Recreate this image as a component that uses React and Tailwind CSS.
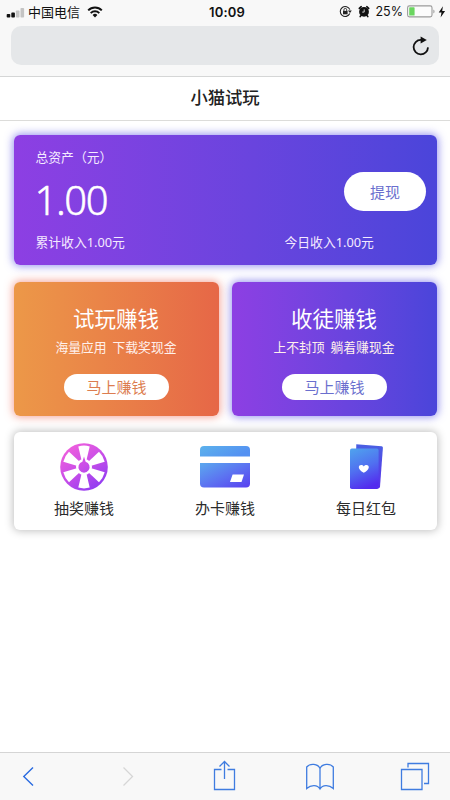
const CJK = "font-['Noto_Sans_CJK_SC',sans-serif]"

function SignalIcon() {
  return (
    <svg width="19" height="14" viewBox="0 0 19 14" className="ml-[6px]">
      <rect x="0.7" y="9" width="3.6" height="3.6" rx="0.8" fill="#111" />
      <rect x="5.3" y="7.6" width="3.6" height="5" rx="0.8" fill="#111" />
      <rect x="9.9" y="5.4" width="3.6" height="7.2" rx="0.8" fill="#c4c4c4" />
      <rect x="14.5" y="3" width="3.6" height="9.6" rx="0.8" fill="#c4c4c4" />
    </svg>
  )
}

function WifiIcon() {
  return (
    <svg width="16" height="12" viewBox="0 0 16 12" fill="none" stroke="#111" strokeWidth="2">
      <path d="M1.2 4.4A9.6 9.6 0 0 1 14.8 4.4" />
      <path d="M3.7 7.1A6.2 6.2 0 0 1 12.3 7.1" />
      <path d="M5.6 9A3.4 3.4 0 0 1 10.4 9L8 11.6Z" fill="#111" stroke="none" />
    </svg>
  )
}

function RotationLockIcon() {
  return (
    <svg width="13" height="13" viewBox="0 0 13 13" fill="none" stroke="#222">
      <path d="M10.8 8.6A5 5 0 1 1 10.9 4.6" strokeWidth="1.1" />
      <path d="M8.9 5.6L12.8 5.6L11 8.1Z" fill="#222" stroke="none" />
      <rect x="4" y="5.9" width="4.6" height="3.4" fill="#222" stroke="none" />
      <path d="M4.9 6V4.8a1.4 1.4 0 0 1 2.8 0V6" strokeWidth="0.9" />
    </svg>
  )
}

function AlarmIcon() {
  return (
    <svg width="12" height="13" viewBox="0 0 12 13">
      <circle cx="6" cy="6.8" r="4.9" fill="#111" />
      <path d="M1.3 3.4L3.2 1.7M10.7 3.4L8.8 1.7M2.8 10.8L2.2 11.6M9.2 10.8L9.8 11.6" stroke="#111" strokeWidth="1.6" strokeLinecap="round" />
      <path d="M6.2 4.4V7.1H4.2" stroke="#f8f8f8" strokeWidth="0.8" fill="none" />
    </svg>
  )
}

function BatteryIcon() {
  return (
    <svg width="29" height="13" viewBox="0 0 29 13">
      <rect x="0.6" y="0.9" width="24.4" height="11" rx="1.8" fill="#fcfcfc" stroke="#9b9b9b" strokeWidth="1.1" />
      <rect x="2.2" y="2.3" width="5.4" height="8.2" rx="0.6" fill="#6bd660" />
      <path d="M26.4 4.4c1.5.6 1.5 3.4 0 4z" fill="#9b9b9b" />
    </svg>
  )
}

function BoltIcon() {
  return (
    <svg width="8" height="12" viewBox="0 0 8 12">
      <path d="M4.9 0.3L0.7 6.6H3.5L2.6 11.6L7.1 5H4.2Z" fill="#111" />
    </svg>
  )
}

function ReloadIcon() {
  return (
    <svg width="18" height="20" viewBox="0 0 18 20">
      <path d="M9.9 3.9H8.7A7.2 7.2 0 1 0 16 11.4" fill="none" stroke="#111" strokeWidth="1.8" />
      <path d="M8.6 0.4L14.8 4L8.6 7.6Z" fill="#111" />
    </svg>
  )
}

function WheelIcon() {
  return (
    <svg width="48" height="48" viewBox="0 0 48 48">
      <defs>
        <linearGradient id="wheel" gradientUnits="userSpaceOnUse" x1="8" y1="2" x2="38" y2="46">
          <stop offset="0" stopColor="#f160dc" />
          <stop offset="0.5" stopColor="#c94ee8" />
          <stop offset="1" stopColor="#8f3cf2" />
        </linearGradient>
      </defs>
      <circle cx="24" cy="24" r="23.8" fill="url(#wheel)" />
      {[0, 60, 120, 180, 240, 300].map((deg) => (
        <path key={deg} d="M21.5 17L18.3 3.4Q24 1.8 29.7 3.4L26.5 17Z" fill="#fff" transform={`rotate(${deg} 24 24)`} />
      ))}
      <circle cx="24" cy="24" r="8" fill="#fff" />
      <path d="M24 13.5L25.6 18.7A5.6 5.6 0 1 1 22.4 18.7Z" fill="url(#wheel)" />
    </svg>
  )
}

function CardIcon() {
  return (
    <svg width="50" height="42" viewBox="0 0 50 42">
      <defs>
        <linearGradient id="cardTop" x1="0" y1="0" x2="1" y2="0.4">
          <stop offset="0" stopColor="#5cb2ec" />
          <stop offset="1" stopColor="#5491f2" />
        </linearGradient>
        <linearGradient id="cardBody" x1="0" y1="0" x2="1" y2="1">
          <stop offset="0" stopColor="#5ba9ee" />
          <stop offset="0.5" stopColor="#5c74f1" />
          <stop offset="1" stopColor="#583ff0" />
        </linearGradient>
      </defs>
      <path d="M0 10.5V4a4 4 0 0 1 4-4h42a4 4 0 0 1 4 4v6.5z" fill="url(#cardTop)" />
      <path d="M0 17h50v20.5a4 4 0 0 1-4 4H4a4 4 0 0 1-4-4z" fill="url(#cardBody)" />
      <path d="M32.6 28.5H44L41.5 36H30Z" fill="#fff" />
    </svg>
  )
}

function PacketIcon() {
  return (
    <svg width="33" height="46" viewBox="0 0 33 46">
      <defs>
        <linearGradient id="packet" x1="0.2" y1="0" x2="0.5" y2="1">
          <stop offset="0" stopColor="#4f9fee" />
          <stop offset="0.5" stopColor="#5070f0" />
          <stop offset="1" stopColor="#532cee" />
        </linearGradient>
        <linearGradient id="packetBack" x1="0" y1="0" x2="0" y2="1">
          <stop offset="0" stopColor="#4a60e2" />
          <stop offset="1" stopColor="#5830ea" />
        </linearGradient>
      </defs>
      <path d="M6.3 0.2L31.6 2.2Q33 2.4 32.9 3.8L30 42.8Q29.8 44.4 28 44.4L5.4 42Z" fill="url(#packetBack)" />
      <rect x="0" y="4.6" width="28.6" height="40.4" rx="1.8" fill="url(#packet)" />
      <path d="M13.8 28.8C10.5 26.8 8.8 25 8.8 23.2C8.8 20.6 12.3 20.2 13.8 22.4C15.3 20.2 18.8 20.6 18.8 23.2C18.8 25 17.1 26.8 13.8 28.8Z" fill="#fff" />
    </svg>
  )
}

function StatusBar() {
  return (
    <div className="grid h-[26px] grid-cols-[1fr_auto_1fr] items-center text-[13px] leading-none text-[#111]">
      <div className="flex items-center">
        <span className="-mt-[3px]"><SignalIcon /></span>
        <span className="ml-[3px] -mt-[3px]">中国电信</span>
        <span className="ml-[7px] -mt-[3px]"><WifiIcon /></span>
      </div>
      <span className="pl-[4px] font-['Inter',sans-serif] text-[13px] font-semibold tracking-[0.2px] -mt-[2px]">10:09</span>
      <div className="flex items-center justify-end pr-[4px]">
        <span className="-mt-[3px]"><RotationLockIcon /></span>
        <span className="ml-[6px] -mt-[3px]"><AlarmIcon /></span>
        <span className="ml-[6px] -mt-[2px] font-['Inter',sans-serif] text-[12.5px]">25%</span>
        <span className="ml-[4px] -mt-[3px]"><BatteryIcon /></span>
        <span className="ml-[2px] -mt-[3px]"><BoltIcon /></span>
      </div>
    </div>
  )
}

function Income({ label, amount }) {
  return (
    <span className="flex">
      {label}
      <span className="font-['Noto_Sans',sans-serif]">{amount}</span>
      元
    </span>
  )
}

function AssetCard() {
  return (
    <section className="flex h-[130px] items-stretch justify-between rounded-[6px] bg-gradient-to-r from-[#8d3fe3] to-[#4a45da] text-[#f4eaff] shadow-[0_0_9px_1px_rgba(74,69,226,0.6)]">
      <div className="flex flex-col pl-[21.5px] text-[12.8px] leading-[20px]">
        <span className="mt-[12px]">总资产（元）</span>
        <span className="mt-[9px] -ml-[1px] font-['Noto_Sans',sans-serif] text-[40px] font-light leading-[48px] tracking-[-1.4px] text-white [-webkit-text-stroke:0.5px_white]">1.00</span>
        <span className="mt-[8px]"><Income label="累计收入" amount="1.00" /></span>
      </div>
      <div className="flex w-[152.5px] flex-col text-[12.8px] leading-[20px]">
        <button className="mt-[37px] ml-[59.5px] h-[39px] w-[82px] rounded-full bg-white text-[15px] leading-[38px] text-[#6a6fce]">提现</button>
        <span className="mt-[21px]"><Income label="今日收入" amount="1.00" /></span>
      </div>
    </section>
  )
}

function PromoCard({ title, desc, className, buttonClass }) {
  return (
    <section className={`flex h-[134px] flex-col items-center rounded-[6px] text-white ${className}`}>
      <h2 className="mt-[21px] mr-[1px] text-[21.5px] leading-[30px]">{title}</h2>
      <p className="mt-[4px] mr-[1px] text-[12.8px] leading-[20px] [word-spacing:3px] text-[#fff0ec]">{desc}</p>
      <button className={`mt-[17px] h-[26px] w-[105px] rounded-full bg-white pb-[1px] text-[15px] leading-[25px] ${buttonClass}`}>马上赚钱</button>
    </section>
  )
}

const shortcuts = [
  { label: '抽奖赚钱', icon: <WheelIcon /> },
  { label: '办卡赚钱', icon: <CardIcon /> },
  { label: '每日红包', icon: <PacketIcon /> },
]

function TabBar() {
  return (
    <footer className="flex h-[48px] items-start border-t border-[#d5d5d5] bg-[#f8f8f8]">
      <svg width="450" height="47" viewBox="0 0 450 47" fill="none" stroke="#3f7ce0" strokeWidth="1.3">
        <path d="M33 14.5L23.8 23.5L33 32.5" stroke="#2a6be0" strokeWidth="1.4" />
        <path d="M123.5 14.5L132.5 23.5L123.5 32.5" stroke="#d6d6d6" strokeWidth="1.3" />
        <path d="M221.5 16.5H214.5V36.5H234.5V16.5H227.5M224.5 26V8.5M219.5 13.5L224.5 8.5L229.5 13.5" />
        <path d="M320 15.5C318 10.5 310 10 306.7 14V35.5C311 31.5 317.5 31.5 320 36C322.5 31.5 329 31.5 333.3 35.5V14C330 10 322 10.5 320 15.5V36" />
        <path d="M401.5 16.5H422V36.5H401.5ZM408 14.5V10.5H428.5V30.5H424" />
      </svg>
    </footer>
  )
}

export default function App() {
  return (
    <div className={`flex h-[800px] w-[450px] flex-col overflow-hidden bg-white ${CJK}`}>
      <header className="h-[77px] border-b border-[#d5d6d6] bg-[#f8f8f8]">
        <StatusBar />
        <div className="mx-[11px] flex h-[39px] items-center justify-end rounded-[10px] bg-[#e5e7e9] pr-[9px]">
          <ReloadIcon />
        </div>
      </header>

      <h1 className="h-[44px] border-b border-[#dcdcda] text-center text-[17.3px] font-medium leading-[40px] text-[#222]">小猫试玩</h1>

      <main className="flex flex-1 flex-col pt-[14px] pr-[13px] pl-[14px]">
        <AssetCard />

        <div className="mt-[17px] grid grid-cols-2 gap-[13px]">
          <PromoCard
            title="试玩赚钱"
            desc="海量应用 下载奖现金"
            className="bg-gradient-to-r from-[#ec9848] to-[#e66747] shadow-[0_0_9px_1px_rgba(235,85,65,0.55)]"
            buttonClass="text-[#dc7d50]"
          />
          <PromoCard
            title="收徒赚钱"
            desc="上不封顶 躺着赚现金"
            className="bg-gradient-to-r from-[#8d3fe3] to-[#4a45da] shadow-[0_0_9px_1px_rgba(74,69,226,0.6)]"
            buttonClass="text-[#6a6fce]"
          />
        </div>

        <section className="mt-[16px] flex h-[98px] justify-between rounded-[6px] bg-white pr-[41px] pl-[40px] shadow-[0_0_9px_1px_rgba(0,0,0,0.25)]">
          {shortcuts.map((s) => (
            <div key={s.label} className="flex w-[60px] flex-col items-center">
              <div className="mt-[11px] flex h-[48px] items-center">{s.icon}</div>
              <span className="mt-[6px] text-[15px] leading-[22px] text-[#2b2b2b]">{s.label}</span>
            </div>
          ))}
        </section>
      </main>

      <TabBar />
    </div>
  )
}
